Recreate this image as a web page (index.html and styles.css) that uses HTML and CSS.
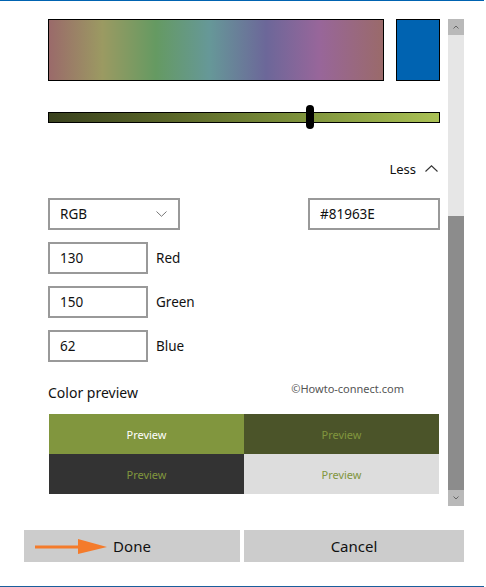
FILE: index.html
```html
<!DOCTYPE html>
<html>
<head>
<meta charset="utf-8">
<link rel="stylesheet" href="styles.css">
</head>
<body>
<div class="frame">
  <div class="topline"></div>
  <div class="main">
    <div class="content">
      <div class="spectrum-row">
        <div class="spectrum"></div>
        <div class="swatch"></div>
      </div>
      <div class="slider"><div class="thumb"></div></div>
      <div class="less-row">
        <span>Less</span>
        <svg class="chev-up" width="13" height="7" viewBox="0 0 13 7"><polyline points="0.5,6.5 6.5,0.8 12.5,6.5" fill="none" stroke="#333" stroke-width="1.1"/></svg>
      </div>
      <div class="format-row">
        <div class="field select">
          <span>RGB</span>
          <svg width="11" height="6" viewBox="0 0 11 6"><polyline points="0.5,0.5 5.5,5.3 10.5,0.5" fill="none" stroke="#777" stroke-width="1"/></svg>
        </div>
        <div class="field hex">#81963E</div>
      </div>
      <div class="channel"><div class="field num">130</div><span class="ch-label">Red</span></div>
      <div class="channel"><div class="field num">150</div><span class="ch-label">Green</span></div>
      <div class="channel"><div class="field num">62</div><span class="ch-label">Blue</span></div>
      <div class="preview-head">
        <span class="preview-label">Color preview</span>
        <span class="watermark">©Howto-connect.com</span>
      </div>
      <div class="preview-grid">
        <div class="cell c1">Preview</div>
        <div class="cell c2">Preview</div>
        <div class="cell c3">Preview</div>
        <div class="cell c4">Preview</div>
      </div>
    </div>
    <div class="scrollbar">
      <div class="sb-btn"><svg width="6" height="4" viewBox="0 0 6 4"><polyline points="0.5,3.5 3,1 5.5,3.5" fill="none" stroke="#666" stroke-width="1"/></svg></div>
      <div class="sb-track"></div>
      <div class="sb-thumb"></div>
      <div class="sb-btn"><svg width="6" height="4" viewBox="0 0 6 4"><polyline points="0.5,0.5 3,3 5.5,0.5" fill="none" stroke="#666" stroke-width="1"/></svg></div>
    </div>
  </div>
  <div class="footer">
    <div class="btn done">
      <svg class="arrow" width="73" height="16" viewBox="0 0 73 16"><rect x="0" y="6.5" width="44" height="3" fill="#f47b2b"/><polygon points="43,0 72,8 43,15" fill="#f47b2b"/></svg>
      Done
    </div>
    <div class="btn cancel">Cancel</div>
  </div>
  <div class="bottomline"></div>
</div>
</body>
</html>
```
FILE: styles.css
```css
* { box-sizing: border-box; }
html, body { margin: 0; padding: 0; background: #fff; }
body {
  font-family: "Noto Sans", "Open Sans", sans-serif;
  color: #000;
  width: 486px;
  height: 587px;
  overflow: hidden;
}
.frame { width: 486px; height: 587px; display: flex; flex-direction: column; }
.topline { height: 1px; width: 484px; background: #0063b1; flex: none; }
.bottomline { height: 1px; width: 484px; background: #1a5e9c; margin-top: 24px; flex: none; }

.main { display: flex; align-items: flex-start; padding: 18px 0 0 48px; flex: none; }
.content { width: 392px; display: flex; flex-direction: column; }

.spectrum-row { display: flex; gap: 12px; height: 62px; }
.spectrum {
  width: 336px; height: 62px; border: 1px solid #000;
  background: linear-gradient(90deg, #9a6a6a 0%, #9b9a62 16%, #659a62 32%, #669898 48%, #6c6799 65%, #98669a 81%, #9a6a6a 100%);
}
.swatch { width: 44px; height: 62px; background: #0063b1; border: 1px solid #000; }

.slider {
  position: relative; margin-top: 31px; height: 11px; border: 1px solid #000;
  background: linear-gradient(90deg, #3a421e 0%, #596528 30%, #7f943c 66%, #aac155 100%);
}
.thumb {
  position: absolute; left: 257px; top: -8px; width: 8px; height: 24px;
  background: #000; border-radius: 4px;
}

.less-row {
  margin-top: 36px; height: 20px; display: flex; justify-content: flex-end; align-items: center;
  font-size: 13px; gap: 9px; padding-right: 2px; color: #111;
}
.less-row .chev-up { margin-top: -2px; }

.format-row { margin-top: 19px; display: flex; justify-content: space-between; }
.field {
  height: 32px; border: 2px solid #999; background: #fff;
  display: flex; align-items: center; padding-left: 10px; font-size: 13.5px; color: #111;
}
.select { width: 132px; justify-content: space-between; padding-right: 11px; }
.hex { width: 132px; }
.channel { margin-top: 12px; display: flex; align-items: center; gap: 8px; }
.num { width: 100px; }
.ch-label { font-size: 13.5px; color: #111; }

.preview-head { margin-top: 20px; height: 20px; display: flex; align-items: center; }
.preview-label { font-size: 14px; color: #111; }
.watermark { margin-left: auto; margin-right: 36px; font-size: 11px; color: #555; margin-top: -7px; }

.preview-grid {
  margin: 12px 1px 0; display: grid; grid-template-columns: 195px 195px; grid-template-rows: 40px 40px;
}
.cell { display: flex; align-items: center; justify-content: center; font-size: 11px; }
.c1 { background: #81963e; color: #fff; }
.c2 { background: #4b5429; color: #81963e; }
.c3 { background: #333333; color: #81963e; }
.c4 { background: #dddddd; color: #81963e; }

.scrollbar { width: 16px; margin-left: 8px; display: flex; flex-direction: column; }
.sb-btn { height: 16px; background: #b9b9b9; display: flex; align-items: center; justify-content: center; }
.sb-track { height: 181px; background: #e6e6e6; }
.sb-thumb { height: 274px; background: #8c8c8c; }

.footer { margin-top: 24px; padding-left: 24px; display: flex; gap: 4px; flex: none; }
.btn {
  height: 32px; background: #cccccc; display: flex; align-items: center; justify-content: center;
  font-size: 15px; color: #111;
}
.done { width: 216px; position: relative; }
.cancel { width: 220px; }
.arrow { position: absolute; left: 11px; top: 9px; }
```
